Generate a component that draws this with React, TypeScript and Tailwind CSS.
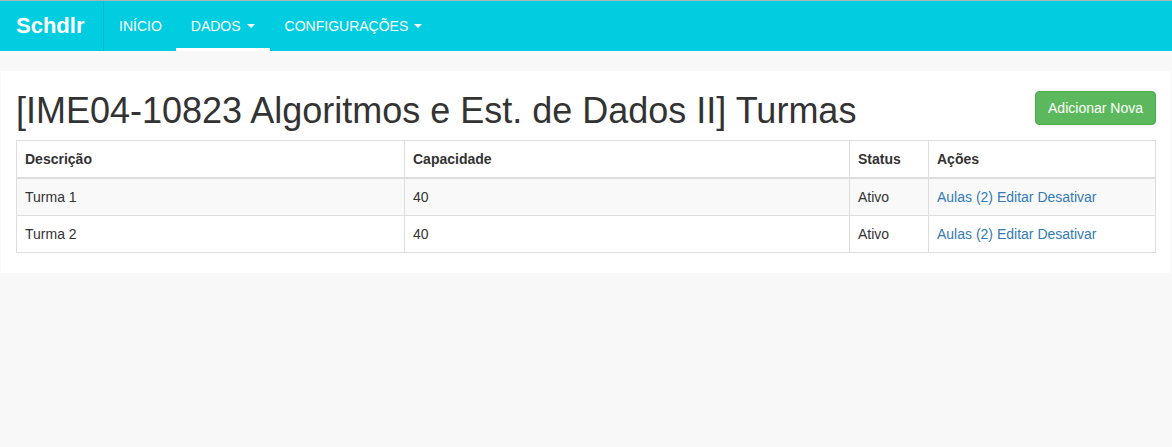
import React from "react";

function Caret() {
  return (
    <span className="inline-block ml-[6px] align-middle w-0 h-0 border-t-[4px] border-t-white border-x-[4px] border-x-transparent" />
  );
}

export default function App() {
  const rows = [
    { d: "Turma 1", c: "40", s: "Ativo" },
    { d: "Turma 2", c: "40", s: "Ativo" },
  ];
  return (
    <div
      className="min-h-[447px] bg-[#f8f8f8] text-[14px] leading-[20px] text-[#333]"
      style={{ fontFamily: '"Liberation Sans", Arial, sans-serif' }}
    >
      <nav className="flex h-[51px] border-t border-t-[#a9b3b5] bg-[#00cde0] text-white">
        <div className="flex w-[104px] items-center border-r border-r-[#00b6c8] pl-[16px] text-[22px] font-bold">
          Schdlr
        </div>
        <div className="flex">
          <a className="flex items-center pl-[15px] pr-[14px]">INÍCIO</a>
          <a className="relative flex items-center px-[15px]">
            DADOS
            <Caret />
            <span className="absolute left-0 right-0 bottom-0 h-[3px] bg-white" />
          </a>
          <a className="flex items-center px-[15px]">
            CONFIGURAÇÕES
            <Caret />
          </a>
        </div>
      </nav>
      <div className="h-[20px]" />
      <div className="mx-[1px] bg-white px-[15px] pb-[20px]">
        <div className="flex items-start justify-between pt-[20px] pb-[9px]">
          <h1 className="text-[36px] leading-[39.6px] font-normal text-[#333]">
            [IME04-10823 Algoritmos e Est. de Dados II] Turmas
          </h1>
          <button className="h-[34px] w-[121px] rounded-[4px] border border-[#4cae4c] bg-[#5cb85c] text-[14px] text-white">
            Adicionar Nova
          </button>
        </div>
        <table className="w-full border-collapse border border-[#ddd] text-left">
          <colgroup>
            <col className="w-[388px]" />
            <col className="w-[445px]" />
            <col className="w-[79px]" />
            <col />
          </colgroup>
          <thead>
            <tr>
              <th className="border border-[#ddd] border-b-2 p-[8px] font-bold">Descrição</th>
              <th className="border border-[#ddd] border-b-2 p-[8px] font-bold">Capacidade</th>
              <th className="border border-[#ddd] border-b-2 p-[8px] font-bold">Status</th>
              <th className="border border-[#ddd] border-b-2 p-[8px] font-bold">Ações</th>
            </tr>
          </thead>
          <tbody>
            {rows.map((r, i) => (
              <tr key={i} className={i % 2 === 0 ? "bg-[#f9f9f9]" : "bg-white"}>
                <td className="border border-[#ddd] p-[8px]">{r.d}</td>
                <td className="border border-[#ddd] p-[8px]">{r.c}</td>
                <td className="border border-[#ddd] p-[8px]">{r.s}</td>
                <td className="border border-[#ddd] p-[8px] text-[#337ab7]">
                  <a>Aulas (2)</a> <a>Editar</a> <a>Desativar</a>
                </td>
              </tr>
            ))}
          </tbody>
        </table>
      </div>
    </div>
  );
}
